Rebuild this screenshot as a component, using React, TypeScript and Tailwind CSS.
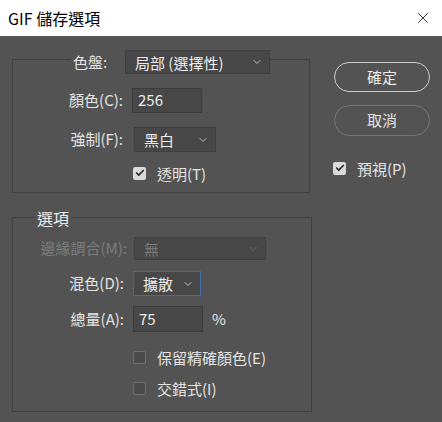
import { X, ChevronDown, Check } from 'lucide-react'

const FONT = { fontFamily: '"Noto Sans CJK TC", "Liberation Sans", sans-serif' }

function Select({ value, width, disabled, focused }: { value: string; width: string; disabled?: boolean; focused?: boolean }) {
  return (
    <div
      className={`${width} h-full flex items-center justify-between pl-[9px] pr-[6px] bg-[#474747] border ${
        focused ? 'border-[#3d6cae]' : 'border-[#3f3f3f]'
      } ${disabled ? 'bg-[#4d4d4d] text-[#7a7a7a]' : 'text-[#ececec]'}`}
    >
      <span className="text-[15px] leading-none">{value}</span>
      <ChevronDown className={`w-3 h-3 ${disabled ? 'text-[#6a6a6a]' : 'text-[#bdbdbd]'}`} strokeWidth={2} />
    </div>
  )
}

function Input({ value, width }: { value: string; width: string }) {
  return (
    <div className={`${width} h-full flex items-center pl-[5px] bg-[#474747] border border-[#3c3c3c] text-[#ececec] text-[15px]`}>
      {value}
    </div>
  )
}

function Checkbox({ checked, label }: { checked?: boolean; label: string }) {
  return (
    <div className="flex items-center h-[20px]">
      {checked ? (
        <span className="w-[13px] h-[13px] rounded-[2px] bg-[#d9d9d9] flex items-center justify-center">
          <Check className="w-[10px] h-[10px] text-[#2a2a2a]" strokeWidth={4} />
        </span>
      ) : (
        <span className="w-[13px] h-[13px] rounded-[2px] bg-[#4a4a4a] border border-[#6f6f6f]" />
      )}
      <span className="ml-[11px] text-[15px] text-[#e4e4e4] leading-none">{label}</span>
    </div>
  )
}

export default function App() {
  return (
    <div className="w-[442px] h-[422px] bg-[#535353] flex flex-col overflow-hidden" style={FONT}>
      {/* Title bar */}
      <div className="h-[36px] bg-white flex items-center justify-between pl-[8px] pr-[10px]">
        <span className="text-[16px] text-black">GIF 儲存選項</span>
        <X className="w-[18px] h-[18px] text-[#222]" strokeWidth={1.2} />
      </div>

      <div className="flex">
        {/* Left column */}
        <div className="pl-3 w-[313px] flex flex-col">
          {/* Palette group */}
          <div className="mt-[23px] h-[134px] w-[298px] border border-[#414141] flex flex-col">
            <div className="flex items-center -mt-[10px] h-[24px]">
              <span className="ml-[57px] w-[55px] pl-[3px] h-full flex items-center bg-[#535353] text-[15px] text-[#e4e4e4]">色盤:</span>
              <Select value="局部 (選擇性)" width="w-[145px]" />
            </div>
            <div className="flex items-center mt-[14px] h-[25px]">
              <span className="w-[110px] text-right text-[15px] text-[#e4e4e4]">顏色(C):</span>
              <div className="ml-[9px] h-full"><Input value="256" width="w-[70px]" /></div>
            </div>
            <div className="flex items-center mt-[14px] h-[25px]">
              <span className="w-[110px] text-right text-[15px] text-[#e4e4e4]">強制(F):</span>
              <div className="ml-[11px] h-full"><Select value="黑白" width="w-[82px]" /></div>
            </div>
            <div className="mt-[11px] ml-[120px]">
              <Checkbox checked label="透明(T)" />
            </div>
          </div>

          {/* Options group */}
          <div className="mt-[24px] h-[195px] w-[300px] border border-[#414141] flex flex-col">
            <div className="flex items-center -mt-[11px] h-[22px]">
              <span className="ml-[21px] px-[3px] bg-[#535353] text-[16px] text-[#ececec]">選項</span>
            </div>
            <div className="flex items-center mt-[8px] h-[23px]">
              <span className="w-[114px] text-right text-[15px] text-[#7c7c7c]">邊緣調合(M):</span>
              <div className="ml-[7px] h-full"><Select value="無" width="w-[132px]" disabled /></div>
            </div>
            <div className="flex items-center mt-[11px] h-[25px]">
              <span className="w-[111px] text-right text-[15px] text-[#e4e4e4]">混色(D):</span>
              <div className="ml-[9px] h-full"><Select value="擴散" width="w-[68px]" focused /></div>
            </div>
            <div className="flex items-center mt-[10px] h-[26px]">
              <span className="w-[111px] text-right text-[15px] text-[#e4e4e4]">總量(A):</span>
              <div className="ml-[9px] h-full"><Input value="75" width="w-[70px]" /></div>
              <span className="ml-[9px] text-[15px] text-[#e4e4e4]">%</span>
            </div>
            <div className="mt-[15px] ml-[120px]">
              <Checkbox label="保留精確顏色(E)" />
            </div>
            <div className="mt-[11px] ml-[120px]">
              <Checkbox label="交錯式(I)" />
            </div>
          </div>
        </div>

        {/* Right column */}
        <div className="ml-[21px] flex flex-col">
          <button className="mt-[26px] h-[30px] w-[96px] rounded-full border-[1.5px] border-[#cdcdcd] text-[15px] text-[#eeeeee]">確定</button>
          <button className="mt-[13px] h-[31px] w-[96px] rounded-full border border-[#777777] text-[15px] text-[#e4e4e4]">取消</button>
          <div className="mt-[22px] -ml-px">
            <Checkbox checked label="預視(P)" />
          </div>
        </div>
      </div>
    </div>
  )
}
